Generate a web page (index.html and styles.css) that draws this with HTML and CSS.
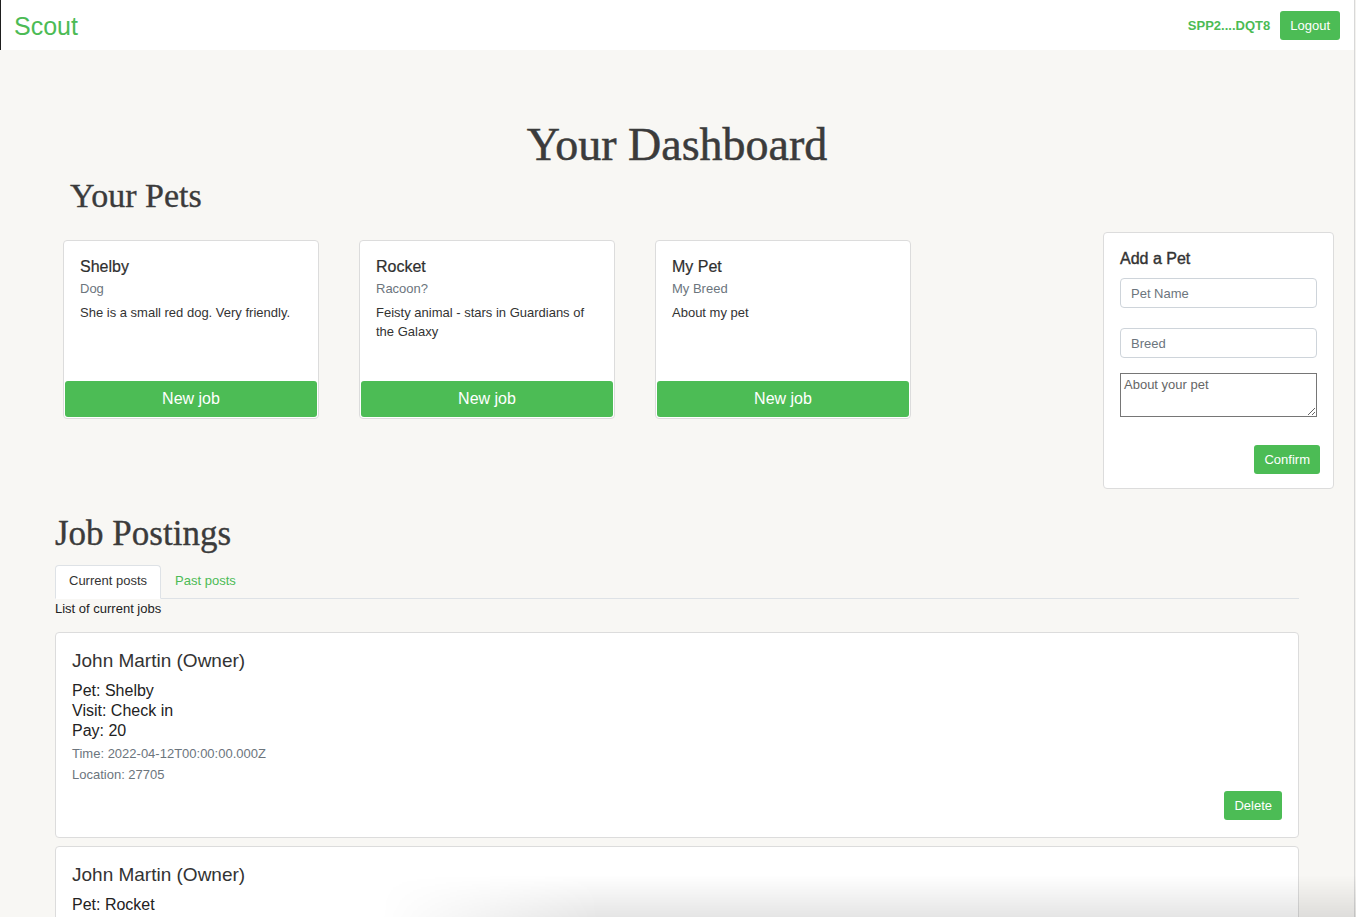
FILE: index.html
```html
<!DOCTYPE html>
<html lang="en">
<head>
<meta charset="utf-8">
<title>Scout – Your Dashboard</title>
<link rel="stylesheet" href="styles.css">
</head>
<body>
<div class="page">
  <header class="topbar">
    <a class="brand" href="#">Scout</a>
    <div class="account">
      <span class="wallet">SPP2....DQT8</span>
      <button class="btn" type="button">Logout</button>
    </div>
  </header>

  <main class="main">
    <h1 class="title">Your Dashboard</h1>

    <section class="pets-row">
      <div class="pets-col">
        <h2 class="section-title pets-title">Your Pets</h2>
        <div class="pet-list">
          <article class="pet-card">
            <div class="pet-body">
              <h3 class="pet-name">Shelby</h3>
              <p class="pet-breed">Dog</p>
              <p class="pet-about">She is a small red dog. Very friendly.</p>
            </div>
            <button class="btn btn-block" type="button">New job</button>
          </article>
          <article class="pet-card">
            <div class="pet-body">
              <h3 class="pet-name">Rocket</h3>
              <p class="pet-breed">Racoon?</p>
              <p class="pet-about">Feisty animal - stars in Guardians of the Galaxy</p>
            </div>
            <button class="btn btn-block" type="button">New job</button>
          </article>
          <article class="pet-card">
            <div class="pet-body">
              <h3 class="pet-name">My Pet</h3>
              <p class="pet-breed">My Breed</p>
              <p class="pet-about">About my pet</p>
            </div>
            <button class="btn btn-block" type="button">New job</button>
          </article>
        </div>
      </div>

      <aside class="add-card">
        <h3 class="add-title">Add a Pet</h3>
        <form class="add-form">
          <input class="field" type="text" placeholder="Pet Name">
          <input class="field field-breed" type="text" placeholder="Breed">
          <textarea class="area" placeholder="About your pet"></textarea>
          <div class="form-actions">
            <button class="btn btn-confirm" type="button">Confirm</button>
          </div>
        </form>
      </aside>
    </section>

    <section class="jobs">
      <h2 class="section-title">Job Postings</h2>
      <nav class="tabs">
        <a class="tab active" href="#">Current posts</a>
        <a class="tab" href="#">Past posts</a>
      </nav>
      <p class="tab-caption">List of current jobs</p>

      <div class="job-list">
        <article class="job-card">
          <h3 class="job-owner">John Martin (Owner)</h3>
          <div class="job-lines">
            <div>Pet: Shelby</div>
            <div>Visit: Check in</div>
            <div>Pay: 20</div>
          </div>
          <p class="job-meta meta-time">Time: 2022-04-12T00:00:00.000Z</p>
          <p class="job-meta meta-loc">Location: 27705</p>
          <div class="job-actions">
            <button class="btn" type="button">Delete</button>
          </div>
        </article>
        <article class="job-card">
          <h3 class="job-owner">John Martin (Owner)</h3>
          <div class="job-lines">
            <div>Pet: Rocket</div>
            <div>Visit: Check in</div>
            <div>Pay: 20</div>
          </div>
          <p class="job-meta meta-time">Time: 2022-04-12T00:00:00.000Z</p>
          <p class="job-meta meta-loc">Location: 27705</p>
          <div class="job-actions">
            <button class="btn" type="button">Delete</button>
          </div>
        </article>
      </div>
    </section>
  </main>
</div>
</body>
</html>
```

FILE: styles.css
```css
html {
  background: #f3f2ef;
}

body {
  margin: 0;
  font-family: "Liberation Sans", Arial, sans-serif;
  font-size: 13px;
  color: #333;
}

body::after {
  content: "";
  position: fixed;
  left: 380px;
  right: 0;
  bottom: 0;
  height: 42px;
  pointer-events: none;
  background: linear-gradient(to bottom, rgba(0, 0, 0, 0), rgba(0, 0, 0, 0.1));
  -webkit-mask-image: linear-gradient(to right, transparent, #000 220px);
  mask-image: linear-gradient(to right, transparent, #000 220px);
}

.page {
  width: 1354px;
  min-height: 100vh;
  background: #f8f7f4;
  border-right: 1px solid #d8d8d8;
}

/* ---------- top bar ---------- */
.topbar {
  height: 50px;
  display: flex;
  align-items: center;
  justify-content: space-between;
  padding: 0 14px 0 13px;
  background: #fff;
  border-left: 1px solid #1e1e1e;
}

.brand {
  margin-top: 2px;
  font-size: 25px;
  line-height: 30px;
  color: #4cbb55;
  text-decoration: none;
}

.account {
  display: flex;
  align-items: center;
  gap: 10px;
}

.wallet {
  margin-top: 1px;
  font-weight: bold;
  font-size: 13px;
  line-height: 18px;
  color: #4cbb55;
}

.btn {
  height: 29px;
  padding: 0 10px;
  border: 0;
  border-radius: 3px;
  background: #4cbc55;
  color: #fff;
  font-family: inherit;
  font-size: 13px;
  line-height: 29px;
  cursor: pointer;
}

/* ---------- main ---------- */
.main {
  padding-top: 67px;
  padding-bottom: 40px;
}

.title {
  margin: 0;
  text-align: center;
  font-family: "Liberation Serif", "Times New Roman", serif;
  font-weight: normal;
  font-size: 46px;
  line-height: 55px;
  color: #3b3b3b;
  -webkit-text-stroke: 0.5px currentColor;
}

.section-title {
  margin: 0;
  font-family: "Liberation Serif", "Times New Roman", serif;
  font-weight: normal;
  font-size: 35px;
  line-height: 42px;
  color: #3b3b3b;
  -webkit-text-stroke: 0.35px currentColor;
}

.pets-row {
  display: flex;
  justify-content: space-between;
  align-items: flex-start;
  margin-top: 3px;
  padding: 0 20px 0 63px;
}

.pets-title {
  margin-left: 7px;
  font-size: 34px;
  line-height: 41px;
}

.pet-list {
  display: flex;
  gap: 40px;
  margin-top: 24px;
}

.pet-card {
  width: 256px;
  height: 179px;
  box-sizing: border-box;
  display: flex;
  flex-direction: column;
  background: #fff;
  border: 1px solid #dcdcdc;
  border-radius: 4px;
}

.pet-body {
  padding: 16px 16px 0;
}

.pet-name {
  margin: 0;
  font-size: 16px;
  line-height: 19px;
  font-weight: normal;
  color: #2f2f2f;
  -webkit-text-stroke: 0.2px currentColor;
}

.pet-breed {
  margin: 4px 0 0;
  line-height: 18px;
  color: #6c757d;
}

.pet-about {
  margin: 5px 0 0;
  line-height: 19px;
  color: #333;
}

.btn-block {
  margin: auto 1px 1px;
  height: 36px;
  font-size: 16px;
  line-height: 36px;
}

/* ---------- add a pet ---------- */
.add-card {
  width: 231px;
  box-sizing: border-box;
  margin-top: 57px;
  padding: 16px 16px 14px;
  background: #fff;
  border: 1px solid #dcdcdc;
  border-radius: 4px;
}

.add-title {
  margin: 0;
  font-size: 16px;
  line-height: 19px;
  font-weight: normal;
  color: #333;
  -webkit-text-stroke: 0.4px currentColor;
}

.add-form {
  display: flex;
  flex-direction: column;
  margin-top: 10px;
}

.field {
  height: 30px;
  box-sizing: border-box;
  padding: 0 10px;
  border: 1px solid #ced4da;
  border-radius: 4px;
  font-family: inherit;
  font-size: 13px;
  color: #333;
  background: #fff;
}

.field::placeholder {
  color: #6c757d;
}

.field-breed {
  margin-top: 20px;
}

.area {
  margin-top: 15px;
  height: 44px;
  box-sizing: border-box;
  padding: 2px 3px;
  border: 1px solid #767676;
  border-radius: 0;
  font-family: inherit;
  font-size: 13px;
  line-height: 18px;
  resize: vertical;
}

.area::placeholder {
  color: #666;
}

.form-actions {
  display: flex;
  justify-content: flex-end;
  margin-top: 28px;
  margin-right: -3px;
}

/* ---------- job postings ---------- */
.jobs {
  margin: 24px 55px 0;
}

.tabs {
  display: flex;
  margin-top: 10px;
  border-bottom: 1px solid #dee2e6;
}

.tab {
  display: block;
  margin-bottom: -1px;
  padding: 6px 13px 8px;
  line-height: 18px;
  border: 1px solid transparent;
  border-radius: 4px 4px 0 0;
  color: #4cbb55;
  text-decoration: none;
}

.tab.active {
  background: #fff;
  color: #333;
  border-color: #dee2e6 #dee2e6 #fff;
}

.tab-caption {
  margin: 0;
  padding-top: 1px;
  line-height: 18px;
  color: #222;
}

.job-list {
  display: flex;
  flex-direction: column;
  gap: 8px;
  margin-top: 14px;
}

.job-card {
  padding: 16px 16px 17px;
  background: #fff;
  border: 1px solid #dcdcdc;
  border-radius: 4px;
}

.job-owner {
  margin: 0;
  font-size: 19px;
  line-height: 23px;
  font-weight: normal;
  color: #333;
}

.job-lines {
  margin-top: 9px;
  font-size: 16px;
  line-height: 20px;
  color: #222;
}

.job-meta {
  margin: 4px 0 0;
  line-height: 18px;
  color: #6c757d;
}

.meta-loc {
  margin-top: 3px;
}

.job-actions {
  display: flex;
  justify-content: flex-end;
  margin-top: 7px;
}
```
